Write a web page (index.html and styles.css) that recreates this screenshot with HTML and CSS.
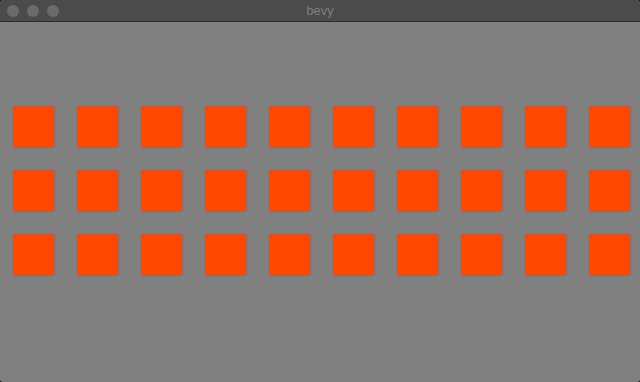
FILE: index.html
```html
<!DOCTYPE html>
<html>
<head>
<meta charset="utf-8">
<link rel="stylesheet" href="styles.css">
</head>
<body>
<div class="window">
  <div class="titlebar">
    <div class="lights">
      <span class="light"></span>
      <span class="light"></span>
      <span class="light"></span>
    </div>
    <div class="title">bevy</div>
  </div>
  <div class="content">
    <div class="grid">
      <div class="sq"></div><div class="sq"></div><div class="sq"></div><div class="sq"></div><div class="sq"></div>
      <div class="sq"></div><div class="sq"></div><div class="sq"></div><div class="sq"></div><div class="sq"></div>
      <div class="sq"></div><div class="sq"></div><div class="sq"></div><div class="sq"></div><div class="sq"></div>
      <div class="sq"></div><div class="sq"></div><div class="sq"></div><div class="sq"></div><div class="sq"></div>
      <div class="sq"></div><div class="sq"></div><div class="sq"></div><div class="sq"></div><div class="sq"></div>
      <div class="sq"></div><div class="sq"></div><div class="sq"></div><div class="sq"></div><div class="sq"></div>
    </div>
  </div>
</div>
</body>
</html>
```
FILE: styles.css
```css
html, body {
  margin: 0;
  padding: 0;
  background: #1e1e1e;
}
.window {
  width: 640px;
  height: 382px;
  display: flex;
  flex-direction: column;
  background: #808080;
  border-radius: 4px 4px 3px 3px;
  overflow: hidden;
}
.titlebar {
  height: 21px;
  flex: 0 0 21px;
  background: #4b4b4b;
  border-bottom: 1px solid #2c2c2c;
  position: relative;
  display: flex;
  align-items: center;
  justify-content: center;
}
.lights {
  position: absolute;
  left: 7px;
  top: 5px;
  display: flex;
  gap: 8px;
}
.light {
  width: 12px;
  height: 12px;
  border-radius: 50%;
  background: #6b6b6b;
}
.title {
  font-family: "Liberation Sans", Arial, sans-serif;
  font-size: 13px;
  color: #7f7f7f;
  line-height: 21px;
}
.content {
  flex: 1;
  padding: 85px 0 0 14px;
}
.grid {
  display: grid;
  grid-template-columns: repeat(10, 40px);
  grid-auto-rows: 40px;
  column-gap: 24px;
  row-gap: 24px;
}
.sq {
  background: #ff4800;
  box-shadow: 0 0 1px 1px rgba(200, 70, 40, 0.6);
  border-radius: 1px;
}
```
